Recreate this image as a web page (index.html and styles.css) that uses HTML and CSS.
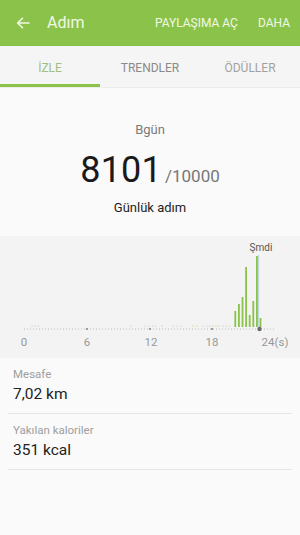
FILE: index.html
```html
<!DOCTYPE html>
<html lang="tr">
<head>
<meta charset="utf-8">
<link rel="stylesheet" href="styles.css">
</head>
<body>
<div class="app">
  <header class="topbar">
    <div class="left">
      <svg class="back" width="14" height="12" viewBox="0 0 14 12"><path d="M13 6H2M6.5 1.2L1.6 6l4.9 4.8" fill="none" stroke="#f1f8e4" stroke-width="1.6" stroke-linecap="round" stroke-linejoin="round"/></svg>
      <span class="title">Adım</span>
    </div>
    <div class="actions">
      <span class="act">PAYLAŞIMA AÇ</span>
      <span class="act">DAHA</span>
    </div>
  </header>
  <nav class="tabs">
    <div class="tab active">İZLE</div>
    <div class="tab t2">TRENDLER</div>
    <div class="tab t3">ÖDÜLLER</div>
  </nav>
  <section class="summary">
    <div class="day">Bgün</div>
    <div class="count"><span class="big">8101</span><span class="goal">/10000</span></div>
    <div class="label">Günlük adım</div>
  </section>
  <section class="chart">
    <svg width="300" height="122" viewBox="0 0 300 122">
      <line x1="24" y1="93" x2="276" y2="93" stroke="#bdbdbd" stroke-width="1" stroke-dasharray="1 2"/>
      <g fill="#bdbdbd">
        <circle cx="32" cy="90" r="0.6"/><circle cx="35" cy="90" r="0.6"/><circle cx="38" cy="90" r="0.6"/>
        <circle cx="131" cy="90" r="0.6"/><circle cx="145" cy="90" r="0.6"/><circle cx="149" cy="90" r="0.6"/>
        <circle cx="153" cy="90" r="0.6"/><circle cx="156" cy="90" r="0.6"/><circle cx="162" cy="90" r="0.6"/>
        <circle cx="173" cy="90" r="0.6"/><circle cx="177" cy="90" r="0.6"/><circle cx="181" cy="90" r="0.6"/>
        <circle cx="203" cy="90" r="0.6"/><circle cx="207" cy="90" r="0.6"/><circle cx="210" cy="90" r="0.6"/>
        <circle cx="223" cy="90" r="0.6"/><circle cx="226" cy="90" r="0.6"/><circle cx="229" cy="90" r="0.6"/>
      </g>
      <g fill="#c5de9c">
        <circle cx="193" cy="90" r="0.7"/><circle cx="197" cy="90" r="0.7"/><circle cx="213" cy="90" r="0.7"/>
        <circle cx="216" cy="90" r="0.7"/><circle cx="219" cy="90" r="0.7"/>
      </g>
      <g fill="#8bc34a">
        <rect x="234.4" y="75" width="1.8" height="16"/>
        <rect x="238.0" y="68" width="1.8" height="23"/>
        <rect x="241.6" y="61" width="1.8" height="30"/>
        <rect x="245.2" y="31" width="1.8" height="60"/>
        <rect x="248.8" y="79" width="1.8" height="12"/>
        <rect x="252.4" y="65" width="1.8" height="26"/>
        <rect x="256.0" y="20" width="1.8" height="71"/>
        <rect x="259.6" y="82" width="1.8" height="9"/>
      </g>
      <line x1="258.6" y1="19" x2="258.6" y2="93" stroke="#a9c9e6" stroke-width="0.8"/>
      <g fill="#8a8a8a">
        <circle cx="87" cy="93" r="1.1"/><circle cx="150" cy="93" r="1.1"/><circle cx="212" cy="93" r="1.1"/>
      </g>
      <circle cx="259.5" cy="93" r="2.2" fill="#6b6b6b"/>
      <text x="261" y="15" class="now">Şmdi</text>
      <g class="ax">
        <text x="24" y="110">0</text>
        <text x="87" y="110">6</text>
        <text x="151" y="110">12</text>
        <text x="212" y="110">18</text>
        <text x="275" y="110">24(s)</text>
      </g>
    </svg>
  </section>
  <section class="stats">
    <div class="stat">
      <div class="slabel">Mesafe</div>
      <div class="svalue">7,02 km</div>
    </div>
    <div class="stat">
      <div class="slabel">Yakılan kaloriler</div>
      <div class="svalue">351 kcal</div>
    </div>
  </section>
</div>
</body>
</html>
```

FILE: styles.css
```css
html, body {
  margin: 0;
  padding: 0;
  background: #fafafa;
  font-family: Roboto, "Liberation Sans", sans-serif;
}
.app {
  width: 300px;
  height: 535px;
  overflow: hidden;
  background: #fafafa;
}
.topbar {
  height: 45px;
  background: #8bc34a;
  border-bottom: 1px solid #86bd46;
  display: flex;
  align-items: center;
  justify-content: space-between;
  padding: 0 10px 0 16px;
  box-sizing: content-box;
}
.left {
  display: flex;
  align-items: center;
}
.back {
  display: block;
  margin-top: 1px;
}
.title {
  margin-left: 17px;
  font-size: 16px;
  color: #f1f8e4;
}
.actions {
  display: flex;
  align-items: center;
  gap: 20px;
}
.act {
  font-size: 12px;
  color: #f1f8e4;
}
.tabs {
  height: 41px;
  display: grid;
  grid-template-columns: 100px 100px 100px;
  background: #f5f5f5;
  border-bottom: 1px solid #ececec;
}
.tab {
  display: flex;
  align-items: center;
  justify-content: center;
  font-size: 12px;
  padding-top: 2px;
  box-sizing: border-box;
  color: #8a8a8a;
}
.tab.active {
  color: #a3be7e;
  border-bottom: 3px solid #8bc34a;
  padding-top: 5px;
}
.tab.t3 {
  color: #a2a2a2;
}
.summary {
  height: 148px;
  display: flex;
  flex-direction: column;
  align-items: center;
  padding-top: 34px;
  box-sizing: border-box;
}
.day {
  font-size: 13px;
  color: #7a7a7a;
  line-height: 16px;
}
.count {
  margin-top: 12px;
  display: flex;
  align-items: baseline;
  line-height: 40px;
}
.big {
  font-size: 36px;
  color: #1a1a1a;
  letter-spacing: 0.2px;
}
.goal {
  font-size: 17px;
  color: #777;
  margin-left: 3px;
}
.label {
  margin-top: 4px;
  font-size: 13px;
  color: #222;
  line-height: 16px;
}
.chart {
  height: 122px;
  background: #f3f3f3;
}
.chart svg {
  display: block;
}
.now {
  font-size: 10px;
  fill: #555;
  text-anchor: middle;
  font-family: Roboto, "Liberation Sans", sans-serif;
}
.ax text {
  font-size: 11.5px;
  fill: #9a9a9a;
  text-anchor: middle;
  font-family: Roboto, "Liberation Sans", sans-serif;
}
.stats {
  padding: 0 8px;
}
.stat {
  border-bottom: 1px solid #e6e6e6;
  padding: 9px 5px 9px;
}
.slabel {
  font-size: 11.5px;
  color: #9e9e9e;
  line-height: 15px;
}
.svalue {
  font-size: 15.5px;
  color: #222;
  line-height: 20px;
  margin-top: 2px;
}
```
